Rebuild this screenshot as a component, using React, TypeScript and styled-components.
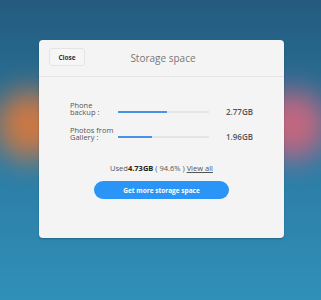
import styled, { createGlobalStyle } from "styled-components";

const GlobalStyle = createGlobalStyle`
  html, body {
    margin: 0;
    padding: 0;
  }
  body {
    font-family: "Open Sans", "Noto Sans", sans-serif;
  }
`;

const Backdrop = styled.div`
  position: relative;
  width: 321px;
  height: 300px;
  overflow: hidden;
  background: linear-gradient(180deg, #245b7e 0%, #2a7aa3 50%, #3190b8 100%);
  display: flex;
  justify-content: center;
  align-items: flex-start;
  padding: 40px 0 0 2px;
  box-sizing: border-box;
`;

const Glow = styled.div<{ $color: string; $left: number }>`
  position: absolute;
  top: 90px;
  left: ${(p) => p.$left}px;
  width: 70px;
  height: 70px;
  border-radius: 50%;
  background: ${(p) => p.$color};
  filter: blur(15px);
  opacity: 0.9;
`;

const Card = styled.div`
  position: relative;
  width: 245px;
  height: 198px;
  background: #f4f4f4;
  border-radius: 4px;
  box-shadow: 0 1px 2px rgba(0, 0, 0, 0.25);
  display: flex;
  flex-direction: column;
`;

const Header = styled.div`
  position: relative;
  height: 36px;
  border-bottom: 1px solid #e6e6e6;
  display: flex;
  align-items: center;
  justify-content: center;
`;

const CloseButton = styled.button`
  position: absolute;
  left: 10px;
  top: 8px;
  width: 36px;
  height: 18px;
  padding: 0;
  border: 1px solid #e4e4e4;
  border-radius: 3px;
  background: #f6f6f6;
  font-family: "Open Sans", sans-serif;
  font-size: 6.5px;
  font-weight: 700;
  color: #333;
`;

const Title = styled.div`
  font-size: 10px;
  color: #777;
  margin-top: -1px;
  margin-left: 3px;
`;

const Body = styled.div`
  padding: 24px 31px 0 31px;
  display: flex;
  flex-direction: column;
  gap: 9px;
`;

const Row = styled.div`
  display: flex;
  align-items: center;
`;

const Label = styled.div`
  width: 48px;
  font-size: 7.5px;
  line-height: 7.5px;
  color: #555;
`;

const Track = styled.div`
  width: 92px;
  height: 2px;
  background: #e4e4e4;
  margin-top: 6px;
`;

const Fill = styled.div`
  height: 100%;
  background: #4a92e6;
`;

const Value = styled.div`
  margin-left: 17px;
  margin-top: 5px;
  font-size: 8px;
  font-weight: 600;
  color: #555;
`;

const Summary = styled.div`
  margin-top: 21px;
  text-align: center;
  font-size: 7.5px;
  color: #555;

  b {
    color: #222;
    font-weight: 700;
  }
`;

const ViewAll = styled.a`
  color: #555;
  text-decoration: underline;
`;

const Primary = styled.button`
  display: block;
  margin: 8px auto 0;
  width: 135px;
  height: 18px;
  border: none;
  border-radius: 9px;
  background: #2a95f6;
  color: #fff;
  font-family: "Open Sans", sans-serif;
  font-size: 6.5px;
  font-weight: 700;
`;

const items = [
  { label: "Phone backup :", pct: 54, size: "2.77GB" },
  { label: "Photos from Gallery :", pct: 38, size: "1.96GB" },
];

export default function App() {
  return (
    <>
      <GlobalStyle />
      <Backdrop>
        <Glow $color="#e0793a" $left={-5} />
        <Glow $color="#d8657c" $left={258} />
        <Card>
          <Header>
            <CloseButton>Close</CloseButton>
            <Title>Storage space</Title>
          </Header>
          <Body>
            {items.map((it) => (
              <Row key={it.label}>
                <Label>{it.label}</Label>
                <Track>
                  <Fill style={{ width: `${it.pct}%` }} />
                </Track>
                <Value>{it.size}</Value>
              </Row>
            ))}
          </Body>
          <Summary>
            Used<b>4.73GB</b> ( 94.6% ) <ViewAll>View all</ViewAll>
          </Summary>
          <Primary>Get more storage space</Primary>
        </Card>
      </Backdrop>
    </>
  );
}
